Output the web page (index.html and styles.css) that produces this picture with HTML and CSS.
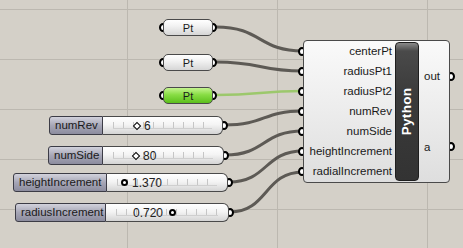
FILE: index.html
```html
<!DOCTYPE html>
<html lang="en">
<head>
    <meta charset="UTF-8">
    <title>Grasshopper - Python</title>
    <link rel="stylesheet" href="styles.css">
</head>
<body>

    <div class="canvas">
        <!-- kabel antar komponen -->
        <svg class="wires" width="463" height="248" viewBox="0 0 463 248">
            <path d="M216 27 C262 27 258 51 303 51" />
            <path d="M216 62 C262 62 258 71 303 71" />
            <path class="wire-sel" d="M216 95 C262 95 258 91 303 91" />
            <path d="M224 125 C266 125 262 111 303 111" />
            <path d="M225 155 C266 155 262 131 303 131" />
            <path d="M229 182 C268 182 264 151 303 151" />
            <path d="M230 212 C268 212 264 172 303 172" />
        </svg>

        <!-- parameter Pt -->
        <div class="param pt-1"><span class="nub nub-in"></span>Pt<span class="nub nub-out"></span></div>
        <div class="param pt-2"><span class="nub nub-in"></span>Pt<span class="nub nub-out"></span></div>
        <div class="param param-sel pt-3"><span class="nub nub-in"></span>Pt<span class="nub nub-out"></span></div>

        <!-- slider -->
        <div class="slider sl-rev">
            <div class="slider-label">numRev</div>
            <div class="slider-track"><span class="grip" style="left: 31px;"><i class="diamond"></i>6</span></div>
            <span class="nub nub-out"></span>
        </div>
        <div class="slider sl-side">
            <div class="slider-label">numSide</div>
            <div class="slider-track"><span class="grip" style="left: 30px;"><i class="diamond"></i>80</span></div>
            <span class="nub nub-out"></span>
        </div>
        <div class="slider sl-height">
            <div class="slider-label">heightIncrement</div>
            <div class="slider-track"><span class="grip" style="left: 14px;"><i class="dot"></i>1.370</span></div>
            <span class="nub nub-out"></span>
        </div>
        <div class="slider sl-radius">
            <div class="slider-label">radiusIncrement</div>
            <div class="slider-track"><span class="grip" style="left: 27px;">0.720<i class="dot dot-after"></i></span></div>
            <span class="nub nub-out"></span>
        </div>

        <!-- komponen Python -->
        <div class="python">
            <div class="inputs">
                <div class="port">centerPt<span class="nub nub-in"></span></div>
                <div class="port">radiusPt1<span class="nub nub-in"></span></div>
                <div class="port">radiusPt2<span class="nub nub-in"></span></div>
                <div class="port">numRev<span class="nub nub-in"></span></div>
                <div class="port">numSide<span class="nub nub-in"></span></div>
                <div class="port">heightIncrement<span class="nub nub-in"></span></div>
                <div class="port">radialIncrement<span class="nub nub-in"></span></div>
            </div>
            <div class="python-bar"><span>Python</span></div>
            <div class="outputs">
                <div class="port-out">out<span class="nub nub-out"></span></div>
                <div class="port-out">a<span class="nub nub-out"></span></div>
            </div>
        </div>
    </div>

</body>
</html>
```

FILE: styles.css
```css
body {
    margin: 0;
    font-family: "Liberation Sans", Arial, sans-serif;
    font-size: 11px;
    color: #1a1a1a;
}

.canvas {
    position: relative;
    z-index: 0;
    width: 463px;
    height: 248px;
    overflow: hidden;
    background-color: #d4d0c8;
    background-image:
        linear-gradient(to right, #bcb8b0 1px, transparent 1px),
        linear-gradient(to bottom, #bcb8b0 1px, transparent 1px);
    background-size: 150px 50px;
    background-position: 127px 9px;
}

.wires {
    position: absolute;
    left: 0;
    top: 0;
    z-index: -2;
}

.wires path {
    fill: none;
    stroke: #5d5a55;
    stroke-width: 3;
}

.wires .wire-sel {
    stroke: #9cc86c;
    stroke-width: 2.5;
}

/* titik sambungan */
.nub {
    position: absolute;
    top: 50%;
    z-index: -1;
    width: 4px;
    height: 5px;
    margin-top: -4.5px;
    border: 2px solid #000;
    border-radius: 50%;
    background: #fff;
}

.nub-in {
    left: -5px;
}

.nub-out {
    right: -5px;
}

/* parameter Pt */
.param {
    position: absolute;
    left: 163px;
    width: 50px;
    height: 17px;
    box-sizing: border-box;
    border: 1px solid #4a4a4a;
    border-radius: 5px;
    background: linear-gradient(#ffffff, #f2f2f2 40%, #d6d6d6);
    display: flex;
    align-items: center;
    justify-content: center;
    font-size: 11px;
}

.param-sel {
    background: linear-gradient(#c4f48e, #88dd44 45%, #5cbf1c);
}

.pt-1 { top: 19px; }
.pt-2 { top: 54px; }
.pt-3 { top: 87px; }

/* slider */
.slider {
    position: absolute;
    height: 19px;
    display: flex;
}

.sl-rev { left: 49px; top: 116px; width: 174px; }
.sl-side { left: 48px; top: 146px; width: 176px; }
.sl-height { left: 13px; top: 173px; width: 215px; }
.sl-radius { left: 15px; top: 203px; width: 214px; }

.slider-label {
    box-sizing: border-box;
    padding: 0 5px;
    height: 19px;
    line-height: 17px;
    border: 1px solid #3c3c46;
    border-radius: 3px 0 0 3px;
    background: linear-gradient(#d2d2dc, #a6a6b6 50%, #8c8c9e);
    font-size: 11.5px;
    white-space: nowrap;
}

.sl-rev .slider-label { width: 54px; }
.sl-side .slider-label { width: 55px; }
.sl-height .slider-label { width: 94px; }
.sl-radius .slider-label { width: 91px; }

.slider-track {
    position: relative;
    flex: 1;
    box-sizing: border-box;
    height: 19px;
    border: 1px solid #4a4a4a;
    border-left: none;
    border-radius: 0 6px 6px 0;
    background: linear-gradient(#ffffff, #f4f4f4 45%, #d4d4d4);
}

/* penggaris di dalam slider */
.slider-track::before {
    content: "";
    position: absolute;
    left: 10px;
    right: 10px;
    top: 5px;
    height: 6px;
    border-bottom: 1px solid #cfcfcf;
    background: repeating-linear-gradient(to right, #c6c6c6 0, #c6c6c6 1px, transparent 1px, transparent 10px);
}

.grip {
    position: absolute;
    top: 0;
    height: 17px;
    display: flex;
    align-items: center;
    gap: 3px;
    font-size: 12px;
    color: #222;
}

.diamond {
    width: 4px;
    height: 4px;
    border: 1.5px solid #000;
    background: #fff;
    transform: rotate(45deg);
    margin-right: 1px;
}

.dot {
    width: 3px;
    height: 3px;
    border: 2px solid #000;
    border-radius: 50%;
    background: #fff;
    margin-right: 1px;
}

.dot-after {
    margin-left: 3px;
}

/* komponen Python */
.python {
    position: absolute;
    left: 303px;
    top: 40px;
    width: 147px;
    height: 143px;
    box-sizing: border-box;
    border: 1px solid #4a4a4a;
    border-radius: 4px;
    background: linear-gradient(#fafafa, #ececec 50%, #dedede);
    display: flex;
}

.inputs {
    width: 91px;
    display: flex;
    flex-direction: column;
    padding: 0 0 1px;
}

.port {
    position: relative;
    flex: 1;
    display: flex;
    align-items: center;
    justify-content: flex-end;
    padding-right: 3px;
    font-size: 11.5px;
    white-space: nowrap;
}

.port .nub-in {
    left: -6px;
}

.python-bar {
    width: 24px;
    margin: 1px 0;
    box-sizing: border-box;
    border: 1px solid #1e1e1e;
    border-radius: 4px;
    background: linear-gradient(#8a8a8a, #4a4a4a 8px, #3a3a3a 40%, #333);
    display: flex;
    align-items: center;
    justify-content: center;
}

.python-bar span {
    transform: rotate(-90deg);
    color: #fff;
    font-weight: bold;
    font-size: 13.5px;
    letter-spacing: 0.3px;
}

.outputs {
    flex: 1;
    display: flex;
    flex-direction: column;
}

.port-out {
    position: relative;
    flex: 1;
    display: flex;
    align-items: center;
    padding-left: 5px;
    font-size: 11.5px;
}

.port-out .nub-out {
    right: -6px;
}
```
